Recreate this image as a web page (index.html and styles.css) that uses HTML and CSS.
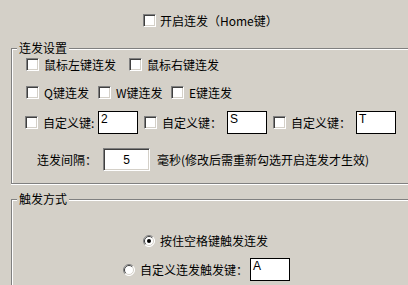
FILE: index.html
```html
<!DOCTYPE html>
<html lang="zh-CN">
<head>
<meta charset="utf-8">
<title>连发设置</title>
<link rel="stylesheet" href="styles.css">
</head>
<body>
<div class="page">
  <div class="toprow">
    <span class="cb"></span>
    <span class="txt">开启连发（Home键）</span>
  </div>

  <div class="group g1">
    <div class="legend">连发设置</div>
    <div class="row r1">
      <div class="opt w103"><span class="cb"></span><span class="txt">鼠标左键连发</span></div>
      <div class="opt"><span class="cb"></span><span class="txt">鼠标右键连发</span></div>
    </div>
    <div class="row r2">
      <div class="opt w72"><span class="cb"></span><span class="txt">Q键连发</span></div>
      <div class="opt w73"><span class="cb"></span><span class="txt">W键连发</span></div>
      <div class="opt"><span class="cb"></span><span class="txt">E键连发</span></div>
    </div>
    <div class="row r3">
      <div class="opt"><span class="cb"></span><span class="txt lbl55">自定义键:</span><span class="keybox">2</span></div>
      <div class="opt sp"><span class="cb"></span><span class="txt lbl65">自定义键：</span><span class="keybox">S</span></div>
      <div class="opt sp"><span class="cb"></span><span class="txt lbl65">自定义键：</span><span class="keybox">T</span></div>
    </div>
    <div class="row r4">
      <span class="txt lbl66">连发间隔：</span>
      <span class="numbox">5</span>
      <span class="txt note">毫秒(修改后需重新勾选开启连发才生效)</span>
    </div>
  </div>

  <div class="group g2">
    <div class="legend">触发方式</div>
    <div class="row q1">
      <svg class="radio" width="12" height="12" viewBox="0 0 12 12">
        <circle cx="6" cy="6" r="5.5" fill="#fff"/>
        <path d="M2.1 9.9 A5.5 5.5 0 0 1 9.9 2.1" stroke="#808080" fill="none"/>
        <path d="M9.9 2.1 A5.5 5.5 0 0 1 2.1 9.9" stroke="#ffffff" fill="none"/>
        <path d="M2.8 9.2 A4.5 4.5 0 0 1 9.2 2.8" stroke="#404040" fill="none"/>
        <path d="M9.2 2.8 A4.5 4.5 0 0 1 2.8 9.2" stroke="#d4d0c8" fill="none"/>
        <circle cx="6" cy="6" r="2" fill="#000"/>
      </svg>
      <span class="txt">按住空格键触发连发</span>
    </div>
    <div class="row q2">
      <svg class="radio" width="12" height="12" viewBox="0 0 12 12">
        <circle cx="6" cy="6" r="5.5" fill="#fff"/>
        <path d="M2.1 9.9 A5.5 5.5 0 0 1 9.9 2.1" stroke="#808080" fill="none"/>
        <path d="M9.9 2.1 A5.5 5.5 0 0 1 2.1 9.9" stroke="#ffffff" fill="none"/>
        <path d="M2.8 9.2 A4.5 4.5 0 0 1 9.2 2.8" stroke="#404040" fill="none"/>
        <path d="M9.2 2.8 A4.5 4.5 0 0 1 2.8 9.2" stroke="#d4d0c8" fill="none"/>
      </svg>
      <span class="txt lbl110">自定义连发触发键：</span>
      <span class="keybox">A</span>
    </div>
  </div>
</div>
</body>
</html>
```
FILE: styles.css
```css
html, body {
  margin: 0;
  padding: 0;
  overflow: hidden;
  background: #d4d0c8;
}
body {
  width: 408px;
  height: 285px;
  font-family: "Noto Sans CJK SC", "Noto Sans", sans-serif;
  font-size: 12px;
  line-height: 14px;
  color: #000;
}
.page {
  padding-top: 14px;
  display: flex;
  flex-direction: column;
}
.toprow {
  display: flex;
  align-items: center;
  height: 13px;
  margin-left: 143px;
}
.toprow .cb { margin-right: 4px; }

.cb {
  box-sizing: border-box;
  flex: none;
  width: 13px;
  height: 13px;
  background: #fff;
  border: 1px solid;
  border-color: #808080 #fff #fff #808080;
  box-shadow: inset 1px 1px 0 #404040, inset -1px -1px 0 #d4d0c8;
  margin-right: 5px;
}
.txt { white-space: nowrap; flex: none; }

.group {
  box-sizing: border-box;
  width: 397px;
  margin-left: 11px;
  border: 1px solid #808080;
  border-right: none;
  display: flex;
  flex-direction: column;
}
.g1 {
  margin-top: 21px;
  padding-bottom: 12px;
  box-shadow: inset 1px 1px 0 #fff, 0 1px 0 #fff;
}
.g2 {
  margin-top: 15px;
  height: 86px;
  border-bottom: none;
  box-shadow: inset 1px 1px 0 #fff;
}
.legend {
  align-self: flex-start;
  margin: -8px 0 0 5px;
  padding: 0 2px;
  height: 14px;
  line-height: 14px;
  background: #d4d0c8;
}
.row {
  display: flex;
  align-items: center;
}
.opt {
  display: flex;
  align-items: center;
  flex: none;
}
.r1 { margin: 3px 0 0 14px; height: 13px; }
.r2 { margin: 15px 0 0 14px; height: 13px; }
.r3 { margin: 12px 0 0 13px; height: 23px; }
.r4 { margin: 14px 0 0 25px; height: 23px; }
.w103 { width: 103px; }
.w72 { width: 72px; }
.w73 { width: 73px; }
.sp { margin-left: 6px; }
.lbl55 { width: 55px; }
.lbl65 { width: 65px; }
.lbl66 { width: 66px; }
.lbl110 { width: 110px; }
.note { margin-left: 7px; }

.keybox {
  box-sizing: border-box;
  flex: none;
  width: 40px;
  height: 23px;
  background: #fff;
  border: 1px solid #000;
  padding: 1px 0 0 2px;
  font-family: "Liberation Sans", Arial, sans-serif;
  font-size: 12px;
  line-height: 13px;
  align-self: stretch;
}
.numbox {
  box-sizing: border-box;
  flex: none;
  width: 47px;
  height: 23px;
  background: #fff;
  border: 1px solid;
  border-color: #808080 #fff #fff #808080;
  box-shadow: inset 1px 1px 0 #404040, inset -1px -1px 0 #d4d0c8;
  font-family: "Liberation Sans", Arial, sans-serif;
  font-size: 12px;
  display: flex;
  align-items: center;
  justify-content: center;
}
.radio { flex: none; margin-right: 5px; }
.q1 { margin: 29px 0 0 131px; height: 12px; }
.q2 { margin: 11px 0 0 111px; height: 23px; }
```
